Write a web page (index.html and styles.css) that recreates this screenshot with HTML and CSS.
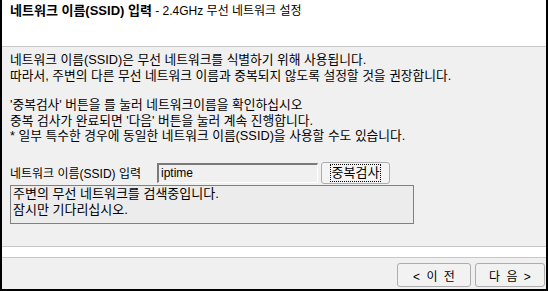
FILE: index.html
```html
<!DOCTYPE html>
<html lang="ko">
<head>
<meta charset="utf-8">
<link rel="stylesheet" href="styles.css">
</head>
<body>
<div class="window">
  <div class="header">
    <span class="title-main">네트워크 이름(SSID) 입력</span><span class="title-sub"> - 2.4GHz 무선 네트워크 설정</span>
  </div>
  <div class="content">
    <p class="para">네트워크 이름(SSID)은 무선 네트워크를 식별하기 위해 사용됩니다.<br>따라서, 주변의 다른 무선 네트워크 이름과 중복되지 않도록 설정할 것을 권장합니다.</p>
    <p class="para para-second">'중복검사' 버튼을 를 눌러 네트워크이름을 확인하십시오<br>중복 검사가 완료되면 '다음' 버튼을 눌러 계속 진행합니다.<br>* 일부 특수한 경우에 동일한 네트워크 이름(SSID)을 사용할 수도 있습니다.</p>
    <div class="ssid-row">
      <span class="ssid-label">네트워크 이름(SSID) 입력</span>
      <span class="ssid-input">iptime</span>
      <span class="btn-check"><span class="focus">중복검사</span></span>
    </div>
    <div class="status">주변의 무선 네트워크를 검색중입니다.<br>잠시만 기다리십시오.</div>
  </div>
  <div class="strip"></div>
  <div class="footer">
    <span class="nav-btn nav-prev">&lt; 이 전</span>
    <span class="nav-btn nav-next">다 음 &gt;</span>
  </div>
</div>
</body>
</html>
```

FILE: styles.css
```css
html, body {
  margin: 0;
  padding: 0;
}
body {
  font-family: "Liberation Sans", "Noto Sans CJK KR", sans-serif;
  font-size: 12px;
  color: #000;
  background: #f0f0f0;
}
.window {
  width: 548px;
  height: 291px;
  box-sizing: border-box;
  border: 2px solid #000;
  border-top: 0;
  display: flex;
  flex-direction: column;
}
.header {
  height: 47px;
  box-sizing: border-box;
  background: #fff;
  border-bottom: 1px solid #c8c8c8;
  padding: 3px 0 0 8px;
  line-height: 16px;
}
.title-main {
  font-weight: bold;
  font-size: 13px;
}
.title-sub {
  font-size: 12px;
}
.content {
  flex: 1;
  padding: 5px 8px 0 8px;
}
.para {
  margin: 0;
  font-size: 12.75px;
  line-height: 16px;
}
.para-second {
  margin-top: 13px;
  line-height: 15.5px;
}
.ssid-row {
  display: flex;
  align-items: center;
  margin-top: 18px;
  height: 22px;
}
.ssid-label {
  width: 147px;
  font-size: 12px;
}
.ssid-input {
  width: 161px;
  height: 20px;
  box-sizing: border-box;
  border-top: 2px solid #7a7a7a;
  border-left: 2px solid #7a7a7a;
  border-right: 1px solid #fff;
  border-bottom: 1px solid #fff;
  padding: 0 2px;
  line-height: 17px;
  background: #f0f0f0;
}
.btn-check {
  margin-left: 3px;
  width: 69px;
  height: 22px;
  box-sizing: border-box;
  border: 1px solid #adadad;
  border-radius: 3px;
  background: #f4f4f4;
  display: flex;
  align-items: center;
  justify-content: center;
}
.focus {
  border: 1px dotted #000;
  padding: 0 1px;
  line-height: 16px;
  font-size: 13px;
}
.status {
  margin-top: 1px;
  width: 404px;
  height: 39px;
  box-sizing: border-box;
  border: 1px solid #808080;
  background: #ececec;
  padding: 0 2px;
  font-size: 13px;
  line-height: 16px;
}
.strip {
  height: 10px;
  background: #fff;
  border-top: 1px solid #c8c8c8;
  border-bottom: 1px solid #c8c8c8;
}
.footer {
  height: 31px;
  box-sizing: border-box;
  padding: 5px 1px 0 0;
  display: flex;
  justify-content: flex-end;
  gap: 4px;
}
.nav-btn {
  height: 24px;
  box-sizing: border-box;
  border: 1px solid #adadad;
  border-radius: 3px;
  background: #f2f2f2;
  display: flex;
  align-items: center;
  justify-content: center;
  font-size: 12px;
  word-spacing: 3px;
}
.nav-prev {
  width: 74px;
}
.nav-next {
  width: 70px;
}
```
